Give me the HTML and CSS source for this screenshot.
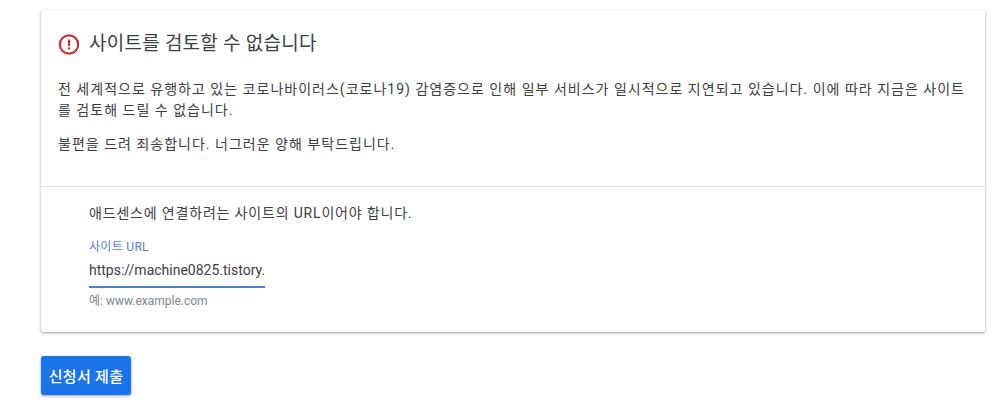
FILE: index.html
```html
<!DOCTYPE html>
<html lang="ko">
<head>
<meta charset="utf-8">
<title>사이트 검토</title>
<link rel="stylesheet" href="styles.css">
</head>
<body>
<main class="page">
  <section class="card">
    <div class="notice">
      <div class="notice-head">
        <svg class="alert-icon" width="24" height="24" viewBox="0 0 24 24" aria-hidden="true">
          <circle cx="12" cy="12.5" r="9.2" fill="none" stroke="#c5342f" stroke-width="2.2"/>
          <rect x="11" y="7.5" width="2.1" height="6.5" fill="#c5342f"/>
          <rect x="11" y="15.3" width="2.1" height="2.1" fill="#c5342f"/>
        </svg>
        <h1 class="notice-title">사이트를 검토할 수 없습니다</h1>
      </div>
      <p class="text">전 세계적으로 유행하고 있는 코로나바이러스(코로나19) 감염증으로 인해 일부 서비스가 일시적으로 지연되고 있습니다. 이에 따라 지금은 사이트를 검토해 드릴 수 없습니다.</p>
      <p class="text apology">불편을 드려 죄송합니다. 너그러운 양해 부탁드립니다.</p>
    </div>
    <div class="form">
      <p class="form-desc">애드센스에 연결하려는 사이트의 URL이어야 합니다.</p>
      <div class="field">
        <div class="field-label">사이트 URL</div>
        <div class="field-value">https://machine0825.tistory.</div>
      </div>
      <div class="field-hint">예: www.example.com</div>
    </div>
  </section>
  <button class="submit" type="button">신청서 제출</button>
</main>
</body>
</html>
```
FILE: styles.css
```css
* { box-sizing: border-box; }
html, body { margin: 0; padding: 0; background: #fff; }
body {
  font-family: Roboto, "Noto Sans CJK KR", sans-serif;
  color: #3c4043;
  overflow: hidden;
}
.page {
  width: 1004px;
  height: 420px;
  padding: 10px 19px 0 41px;
}
.card {
  height: 322px;
  background: #fff;
  border-radius: 2px;
  box-shadow: 0 1px 2px rgba(60,64,67,.3), 0 1px 3px 1px rgba(60,64,67,.15);
}
.notice {
  height: 177px;
  padding: 22px 17px 0;
  border-bottom: 1px solid #e0e0e0;
}
.notice-head {
  display: flex;
  align-items: center;
  gap: 8px;
  height: 24px;
  margin-left: -1px;
}
.alert-icon { flex: none; width: 24px; height: 24px; }
.notice-title {
  margin: -1px 0 0;
  font-size: 19px;
  font-weight: 400;
  line-height: 24px;
  letter-spacing: .25px;
  color: #3c4043;
}
.text {
  margin: 23px 0 0;
  font-size: 14px;
  line-height: 21px;
  letter-spacing: 1.01px;
}
.apology { margin-top: 13px; }
.form { padding: 16px 48px 0; }
.form-desc {
  margin: 0;
  font-size: 14px;
  line-height: 20px;
  letter-spacing: .82px;
  color: #3c4043;
}
.field {
  width: 176px;
  margin-top: 16px;
  border-bottom: 2px solid #4a7fdc;
}
.field-label {
  font-size: 12px;
  line-height: 16px;
  letter-spacing: .3px;
  color: #4a7fdc;
}
.field-value {
  margin-top: 5px;
  padding-bottom: 6px;
  font-size: 14px;
  line-height: 20px;
  color: #3c4043;
  white-space: nowrap;
}
.field-hint {
  margin-top: 5px;
  font-size: 12px;
  line-height: 16px;
  color: #80868b;
}
.submit {
  display: block;
  width: 90px;
  height: 39px;
  margin-top: 24px;
  padding: 0;
  border: 0;
  border-radius: 3px;
  background: #1a73e8;
  color: #fff;
  font-family: inherit;
  font-size: 15px;
  font-weight: 500;
  letter-spacing: .3px;
  box-shadow: 0 1px 2px rgba(60,64,67,.3), 0 1px 3px 1px rgba(60,64,67,.15);
}
```
